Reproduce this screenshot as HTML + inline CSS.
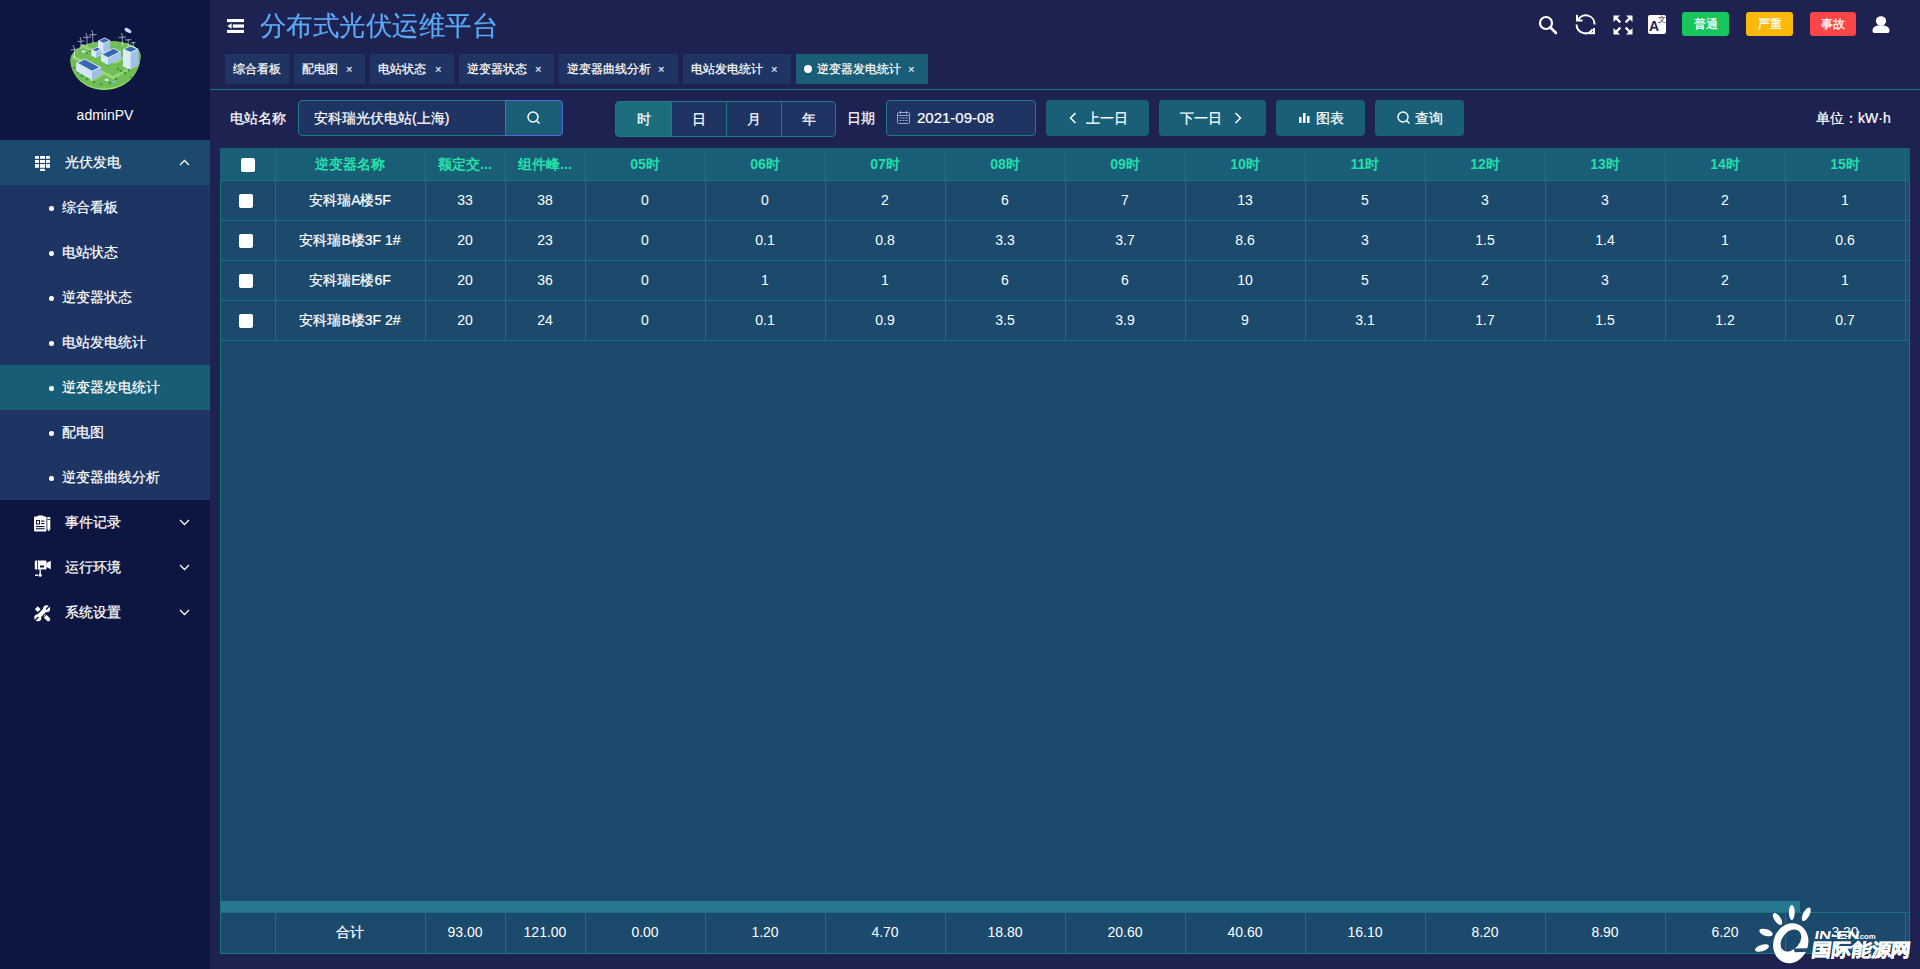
<!DOCTYPE html>
<html><head><meta charset="utf-8">
<style>
*{margin:0;padding:0;box-sizing:border-box}
html,body{width:1920px;height:969px;overflow:hidden;background:#1d2250;font-family:"Liberation Sans",sans-serif;color:#fff;font-size:14px}
.abs{position:absolute}
#side{position:absolute;left:0;top:0;width:210px;height:969px;background:#0d1541}
#logo{position:absolute;left:65px;top:20px;width:80px;height:75px}
#user{position:absolute;left:0;top:106px;width:210px;text-align:center;font-size:14px;line-height:18px}
.mi{position:absolute;left:0;width:210px;height:45px;font-size:14px;line-height:45px}
.mi .ic{position:absolute;left:34px;top:15px;width:16px;height:16px}
.mi .tx{position:absolute;left:65px;top:0}
.mi .ch{position:absolute;left:179px;top:19px;width:11px;height:7px}
.sub{position:absolute;left:0;width:210px;height:45px;line-height:45px;font-size:14px}
.sub .dot{position:absolute;left:49px;top:21px;width:4.5px;height:4.5px;border-radius:50%;background:#fff}
.sub .tx{position:absolute;left:62px;top:0}
#hdr-title{position:absolute;left:260px;top:7px;font-size:26.2px;letter-spacing:0.45px;line-height:36px;color:#5aaaf6;transform:scaleY(1.025);transform-origin:0 0;-webkit-text-stroke:0.2px #5aaaf6}
.tab{position:absolute;top:54px;height:30px;background:#1f3463;font-size:12px;line-height:30px;color:#fff;padding-left:8px}
.tab .x{position:absolute;font-size:11px;top:0;color:#dfe3ee}
#tabline{position:absolute;left:210px;top:89px;width:1710px;height:1px;background:#1a7d86}
.lbl{position:absolute;font-size:14px;line-height:18px}
.btn{position:absolute;top:100px;height:36px;background:#1a5f78;border-radius:4px;font-size:14px;line-height:36px;text-align:center}
#tbl{position:absolute;left:220px;top:148px;width:1690px;height:806px;background:#1b4a6d;border:1px solid #18777f}
.th{position:absolute;top:0;height:33px;background:#195d76}
.cell{position:absolute;text-align:center;font-size:13px}
.vl{position:absolute;width:1px;background:#18737d}
.hl{position:absolute;height:1px;background:#18737d}
.chk{position:absolute;width:14px;height:14px;background:#fff;border-radius:2px}
.th-t{position:absolute;top:148px;height:33px;line-height:33px;text-align:center;font-size:14px;font-weight:bold;color:#25dfa9}
.td{position:absolute;height:40px;line-height:40px;text-align:center;font-size:14px;color:#fff}
.cj{-webkit-text-stroke:0.22px #fff}
.tab,.sub .tx,.mi .tx,.lbl,.btn span{-webkit-text-stroke:0.22px #fff}
</style></head><body>
<div id="side">
  <div id="logo">
    <svg width="80" height="75" viewBox="0 0 80 75">
      <path d="M5.5 41 C5 30 22 21 42 21 C60 21 76 26 75.5 36 C75 55 60 70 39 70 C20 70 6 56 5.5 41Z" fill="#95e46a"/>
      <path d="M5.5 40 C5 30 22 21 42 21 C60 21 76 26 75.5 36 C75 54 60 68.5 39 68.5 C20 68.5 6 55 5.5 40Z" fill="#72bd55"/>
      <path d="M8 35 L48 56 L73 42 L74 45 L48 59.5 L7 38Z" fill="#98d57a"/>
      <path d="M18 24 L50 41 L70 30 L72 32 L50 44 L15 26Z" fill="#98d57a"/>
      <path d="M37 52 L24 60 L27 62 L40 54Z" fill="#98d57a"/>
      <g fill="#3e9a3c"><circle cx="9" cy="48" r="1.2"/><circle cx="13" cy="52" r="1.3"/><circle cx="17" cy="56" r="1.3"/><circle cx="22" cy="59" r="1.3"/><circle cx="29" cy="62" r="1.3"/><circle cx="36" cy="64.5" r="1.3"/><circle cx="45" cy="63" r="1.3"/><circle cx="51" cy="59" r="1.3"/><circle cx="53" cy="49" r="1.3"/><circle cx="56" cy="51" r="1.3"/><circle cx="60" cy="53" r="1.3"/><circle cx="64" cy="50" r="1.3"/><circle cx="68" cy="47" r="1.2"/><circle cx="43" cy="45" r="1.2"/><circle cx="46" cy="43" r="1.2"/><circle cx="22" cy="33" r="1.1"/><circle cx="25" cy="31" r="1.1"/><circle cx="41" cy="61" r="1.2"/><circle cx="66" cy="57" r="1.1"/></g>
      <g stroke="#eef3fa" stroke-width="0.6" fill="none">
        <path d="M9.5 38 V29 M5.5 30 L13.5 29 M9.5 29 L8 25"/>
        <path d="M16 29 V20.5 M12.5 21.5 L19.5 21 M16 20.5 L15 17"/>
        <path d="M22 26 V16.5 M18 17.5 L26 17 M22 16.5 L21 13"/>
        <path d="M27.8 23 V14 M24 15 L31.5 14.5 M27.8 14 L27 10"/>
        <path d="M57.3 25.5 V16.5 M53.5 17.5 L61 17 M57.3 16.5 L56.5 13"/>
        <path d="M63.2 25.5 V19.2 M60 20 L66.5 19.7"/>
        <path d="M68.3 26 V22 M66 22.8 L70.5 22.5"/>
      </g>
      <!-- tall right building -->
      <path d="M58 29.4 L58 46.4 L65.8 49.5 L65.8 32.9Z" fill="#dcebfb"/>
      <path d="M65.8 32.9 L65.8 49.5 L73.5 45 L73.5 29Z" fill="#9fc0ea"/>
      <path d="M58 29.4 L65.4 25.5 L73.5 29 L65.8 32.9Z" fill="#f2f7fd"/>
      <path d="M59.5 29.3 L65.4 26.5 L71.8 29.1 L65.8 31.9Z" fill="#3a66b6"/>
      <!-- tall mid building -->
      <path d="M33 20.5 L33 31 L38.7 34 L38.7 24Z" fill="#d8e9fb"/>
      <path d="M38.7 24 L38.7 34 L45.3 30.5 L45.3 20.5Z" fill="#a3c3eb"/>
      <path d="M33 20.5 L40 17.4 L45.3 20.5 L38.7 24Z" fill="#f2f7fd"/>
      <path d="M34.3 20.6 L40 18.2 L44 20.5 L38.7 23Z" fill="#3a66b6"/>
      <!-- small mid-left building -->
      <path d="M26.3 29.8 L26.3 35.5 L31 38 L31 32Z" fill="#dcebfb"/>
      <path d="M31 32 L31 38 L36.4 35 L36.4 29Z" fill="#a3c3eb"/>
      <path d="M26.3 29.8 L32.5 26.7 L36.4 29 L31 32Z" fill="#f2f7fd"/>
      <path d="M27.6 29.8 L32.5 27.4 L35.2 29 L31 31.2Z" fill="#3a66b6"/>
      <!-- long building -->
      <path d="M36 34.4 L36 41 L43.3 45.3 L43.3 38Z" fill="#d8e9fb"/>
      <path d="M43.3 38 L43.3 45.3 L56 38.7 L56 31.7Z" fill="#a6c5ec"/>
      <path d="M36 34.4 L48.4 27.9 L56 31.7 L43.3 38Z" fill="#f2f7fd"/>
      <path d="M37.6 34.4 L48.4 28.8 L54.4 31.8 L43.3 37.2Z" fill="#3a66b6"/>
      <!-- bottom-left building -->
      <path d="M11.2 43 L11.2 51 L27 60 L27 51.8Z" fill="#d3e5f9"/>
      <path d="M27 51.8 L27 60 L36 55 L36 47.2Z" fill="#9fbfe9"/>
      <path d="M11.2 43 L19.7 38.7 L36 47.2 L27 51.8Z" fill="#f2f7fd"/>
      <path d="M13 43 L19.7 39.6 L34.2 47.2 L27 50.8Z" fill="#3a66b6"/>
      <ellipse cx="63" cy="10.5" rx="3.8" ry="1.9" transform="rotate(32 63 10.5)" fill="#c9def5"/>
      <ellipse cx="18.5" cy="31.5" rx="2" ry="1.2" fill="#c9def5"/>
      <ellipse cx="41.5" cy="60" rx="2" ry="1.2" fill="#d8e6f6"/>
      <ellipse cx="49" cy="62" rx="2" ry="1.3" fill="#7fb6e0"/>
    </svg>
  </div>
  <div id="user">adminPV</div>

  <div class="mi" style="top:140px;background:#1b4a6e">
    <svg class="ic" viewBox="0 0 17 17" style="left:34px;top:15px;width:17px;height:17px"><g fill="#fff"><rect x="1" y="1" width="4" height="2.8"/><rect x="6" y="1" width="5" height="2.8"/><rect x="12" y="1" width="4" height="2.8"/><rect x="1" y="5" width="4" height="2.9"/><rect x="6" y="5" width="5" height="2.9"/><rect x="12" y="5" width="4" height="2.9"/><rect x="1" y="9.1" width="4" height="3.7"/><rect x="6" y="9.1" width="5" height="3.7"/><rect x="12" y="9.1" width="4" height="3.7"/><path d="M6.6 13.8 H10.4 L11.3 16 H5.7Z"/></g></svg>
    <span class="tx">光伏发电</span>
    <svg class="ch" viewBox="0 0 11 7"><path d="M1 6 L5.5 1.5 L10 6" stroke="#fff" stroke-width="1.3" fill="none"/></svg>
  </div>
  <div class="abs" style="left:0;top:185px;width:210px;height:315px;background:#1e3463"></div>
  <div class="sub" style="top:185px"><span class="dot"></span><span class="tx">综合看板</span></div>
  <div class="sub" style="top:230px"><span class="dot"></span><span class="tx">电站状态</span></div>
  <div class="sub" style="top:275px"><span class="dot"></span><span class="tx">逆变器状态</span></div>
  <div class="sub" style="top:320px"><span class="dot"></span><span class="tx">电站发电统计</span></div>
  <div class="sub" style="top:365px;background:#185d76"><span class="dot"></span><span class="tx">逆变器发电统计</span></div>
  <div class="sub" style="top:410px"><span class="dot"></span><span class="tx">配电图</span></div>
  <div class="sub" style="top:455px"><span class="dot"></span><span class="tx">逆变器曲线分析</span></div>

  <div class="mi" style="top:500px">
    <svg class="ic" viewBox="0 0 17 17" style="left:34px;top:15px;width:17px;height:17px"><g fill="#fff"><rect x="0" y="1.5" width="12.5" height="15" rx="1"/><rect x="3.5" y="0.5" width="6" height="2.5" rx="0.8"/><path d="M13.3 2 H16.3 V14 L14.8 16.5 L13.3 14Z"/></g><g fill="#0e1540"><rect x="2" y="5" width="4" height="4.5"/><rect x="7" y="5.5" width="3.5" height="1.1"/><rect x="7" y="8" width="3.5" height="1.1"/><rect x="2" y="11" width="8.5" height="1.1"/><rect x="2" y="13.2" width="8.5" height="1.1"/><rect x="13.3" y="4" width="3" height="0.8"/></g><rect x="3" y="6" width="2" height="2.5" fill="#fff"/></svg>
    <span class="tx">事件记录</span>
    <svg class="ch" viewBox="0 0 11 7"><path d="M1 1 L5.5 5.5 L10 1" stroke="#fff" stroke-width="1.3" fill="none"/></svg>
  </div>
  <div class="mi" style="top:545px">
    <svg class="ic" viewBox="0 0 17 17" style="left:34px;top:15px;width:17px;height:17px"><g fill="#fff"><rect x="0.8" y="0.5" width="11.8" height="9" rx="1.2"/><path d="M12.6 3 L16.8 0.8 V9.2 L12.6 7Z"/><rect x="5.5" y="9.5" width="1.3" height="4.5"/><circle cx="6.2" cy="15.2" r="1.6"/><rect x="1" y="14.5" width="3" height="1.4"/></g><g fill="#0e1540"><rect x="3" y="0.5" width="0.8" height="9"/><rect x="6" y="5.5" width="4" height="2"/></g></svg>
    <span class="tx">运行环境</span>
    <svg class="ch" viewBox="0 0 11 7"><path d="M1 1 L5.5 5.5 L10 1" stroke="#fff" stroke-width="1.3" fill="none"/></svg>
  </div>
  <div class="mi" style="top:590px">
    <svg class="ic" viewBox="0 0 17 17" style="left:34px;top:15px;width:17px;height:17px"><g stroke="#fff" stroke-linecap="round" fill="none"><path d="M3 13 L12.5 3.5" stroke-width="4.2"/><path d="M11.6 11.6 L14.3 14.3" stroke-width="3.8"/></g><circle cx="12.6" cy="3.8" r="3.5" fill="#fff"/><circle cx="3.8" cy="12.7" r="3.5" fill="#fff"/><path d="M12 4.4 L16 0.4" stroke="#0e1540" stroke-width="1.4"/><path d="M4.4 12.1 L0.6 15.9" stroke="#0e1540" stroke-width="1.4"/><path d="M9.9 12.3 L12.3 9.9" stroke="#0e1540" stroke-width="0.9"/><path d="M0.9 4.2 L3.8 1.3 L6.6 4.2 L3.8 7.1Z" fill="#fff"/></svg>
    <span class="tx">系统设置</span>
    <svg class="ch" viewBox="0 0 11 7"><path d="M1 1 L5.5 5.5 L10 1" stroke="#fff" stroke-width="1.3" fill="none"/></svg>
  </div>
</div>

<!-- header -->
<svg class="abs" style="left:227px;top:19px" width="17" height="14" viewBox="0 0 17 14"><g fill="#fff"><rect x="0" y="0" width="17" height="3.1"/><rect x="5.8" y="5.4" width="11.2" height="3.3"/><rect x="0" y="10.9" width="17" height="3.1"/><path d="M0.3 7 L4.6 4.3 L4.6 9.8Z"/></g></svg>
<div id="hdr-title">分布式光伏运维平台</div>

<!-- right icons -->
<svg class="abs" style="left:1538px;top:15px" width="20" height="20" viewBox="0 0 20 20"><circle cx="8" cy="8" r="6" stroke="#fff" stroke-width="2.2" fill="none"/><path d="M12.5 12.5 L18 18" stroke="#fff" stroke-width="2.6" stroke-linecap="round"/></svg>
<svg class="abs" style="left:1575px;top:14px" width="21" height="21" viewBox="0 0 21 21"><g stroke="#fff" stroke-width="2" fill="none"><path d="M3.2 5.8 A8.7 8.7 0 0 1 19.5 10.5"/><path d="M2 6.5 V1.8 M2 6.5 H6.5" stroke-linecap="square"/><path d="M1.6 10.5 A8.7 8.7 0 0 0 17.6 15.3"/><path d="M19 15 V19.3 M19 19.3 H14.5" stroke-linecap="square"/></g></svg>
<svg class="abs" style="left:1613px;top:15px" width="20" height="20" viewBox="0 0 20 20"><g fill="#fff"><path d="M0.5 0.5 H7 L0.5 7Z"/><path d="M19.5 0.5 H13 L19.5 7Z"/><path d="M0.5 19.5 H7 L0.5 13Z"/><path d="M19.5 19.5 H13 L19.5 13Z"/></g><g stroke="#fff" stroke-width="2.4"><path d="M3 3 L7.3 7.3 M17 3 L12.7 7.3 M3 17 L7.3 12.7 M17 17 L12.7 12.7"/></g></svg>
<div class="abs" style="left:1648px;top:15px;width:18px;height:19px;background:#fff;border-radius:2px"></div>
<div class="abs" style="left:1649px;top:17px;font-size:14px;font-weight:bold;color:#1e2350;line-height:18px">A</div>
<div class="abs" style="left:1658px;top:15px;font-size:8px;color:#1e2350;line-height:10px">文</div>
<div class="abs" style="left:1682px;top:12px;width:47px;height:24px;background:#18c45c;border-radius:3px;font-size:12px;line-height:24px;text-align:center;-webkit-text-stroke:0.25px #fff">普通</div>
<div class="abs" style="left:1746px;top:12px;width:47px;height:24px;background:#fdb90b;border-radius:3px;font-size:12px;line-height:24px;text-align:center;-webkit-text-stroke:0.25px #fff">严重</div>
<div class="abs" style="left:1810px;top:12px;width:46px;height:24px;background:#fa4646;border-radius:3px;font-size:12px;line-height:24px;text-align:center;-webkit-text-stroke:0.25px #fff">事故</div>
<svg class="abs" style="left:1871px;top:15px" width="20" height="20" viewBox="0 0 20 20"><ellipse cx="10" cy="5.9" rx="5.1" ry="4.7" fill="#fff"/><path d="M1.5 15.5 C1.5 12 5 10.3 10 10.3 C15 10.3 18.5 12 18.5 15.5 C18.5 17.5 17.5 18 16 18 H4 C2.5 18 1.5 17.5 1.5 15.5Z" fill="#fff"/></svg>

<!-- tabs -->
<div class="tab" style="left:225px;width:64px">综合看板</div>
<div class="tab" style="left:294px;width:71px">配电图<span class="x" style="left:52px">×</span></div>
<div class="tab" style="left:370px;width:84px">电站状态<span class="x" style="left:65px">×</span></div>
<div class="tab" style="left:459px;width:95px">逆变器状态<span class="x" style="left:76px">×</span></div>
<div class="tab" style="left:559px;width:119px">逆变器曲线分析<span class="x" style="left:99px">×</span></div>
<div class="tab" style="left:683px;width:108px">电站发电统计<span class="x" style="left:88px">×</span></div>
<div class="tab" style="left:796px;width:132px;background:#195d76;padding-left:21px"><span class="abs" style="left:8px;top:11px;width:8px;height:8px;border-radius:50%;background:#fff"></span>逆变器发电统计<span class="x" style="left:112px">×</span></div>
<div id="tabline"></div>

<!-- toolbar -->
<div class="lbl" style="left:230px;top:109px">电站名称</div>
<div class="abs" style="left:298px;top:100px;width:265px;height:36px;background:#1f3463;border:1px solid #1f7a84;border-radius:4px"></div>
<div class="abs" style="left:505px;top:100px;width:58px;height:36px;background:#195d76;border:1px solid #4c6bd8;border-radius:0 4px 4px 0"></div>
<svg class="abs" style="left:527px;top:111px" width="14" height="14" viewBox="0 0 14 14"><circle cx="6" cy="6" r="5" stroke="#fff" stroke-width="1.5" fill="none"/><path d="M9.5 9.5 L12.5 12.5" stroke="#fff" stroke-width="1.5"/></svg>
<div class="lbl" style="left:314px;top:109px">安科瑞光伏电站(上海)</div>

<div class="abs" style="left:615px;top:101px;width:221px;height:36px;background:#1f3463;border:1px solid #1f7a84;border-radius:4px;overflow:hidden">
  <div class="abs" style="left:0;top:0;width:55px;height:34px;background:#1a6e7e"></div>
  <div class="abs" style="left:55px;top:0;width:1px;height:34px;background:#1f7a84"></div>
  <div class="abs" style="left:110px;top:0;width:1px;height:34px;background:#1f7a84"></div>
  <div class="abs" style="left:165px;top:0;width:1px;height:34px;background:#1f7a84"></div>
  <div class="abs" style="left:0;top:0;width:55px;line-height:34px;text-align:center;-webkit-text-stroke:0.22px #fff">时</div>
  <div class="abs" style="left:55px;top:0;width:55px;line-height:34px;text-align:center;-webkit-text-stroke:0.22px #fff">日</div>
  <div class="abs" style="left:110px;top:0;width:55px;line-height:34px;text-align:center;-webkit-text-stroke:0.22px #fff">月</div>
  <div class="abs" style="left:165px;top:0;width:55px;line-height:34px;text-align:center;-webkit-text-stroke:0.22px #fff">年</div>
</div>
<div class="lbl" style="left:847px;top:109px">日期</div>
<div class="abs" style="left:886px;top:100px;width:150px;height:36px;background:#1f3463;border:1px solid #1f7a84;border-radius:4px"></div>
<svg class="abs" style="left:897px;top:111px" width="13" height="13" viewBox="0 0 13 13"><g stroke="#9aa7c4" fill="none" stroke-width="1"><rect x="0.5" y="1.5" width="12" height="11" rx="1"/><path d="M0.5 4.5 H12.5 M3.5 0 V3 M9.5 0 V3"/></g><g fill="#9aa7c4"><rect x="2.5" y="6.5" width="2" height="1"/><rect x="5.5" y="6.5" width="2" height="1"/><rect x="8.5" y="6.5" width="2" height="1"/><rect x="2.5" y="9" width="2" height="1"/><rect x="5.5" y="9" width="2" height="1"/><rect x="8.5" y="9" width="2" height="1"/></g></svg>
<div class="lbl" style="left:917px;top:109px;font-size:15px">2021-09-08</div>

<div class="btn" style="left:1046px;width:103px"><span style="padding-left:18px">上一日</span></div>
<svg class="abs" style="left:1069px;top:112px" width="8" height="12" viewBox="0 0 8 12"><path d="M6.5 1 L1.5 6 L6.5 11" stroke="#fff" stroke-width="1.5" fill="none"/></svg>
<div class="btn" style="left:1159px;width:107px"><span style="padding-right:24px">下一日</span></div>
<svg class="abs" style="left:1234px;top:112px" width="8" height="12" viewBox="0 0 8 12"><path d="M1.5 1 L6.5 6 L1.5 11" stroke="#fff" stroke-width="1.5" fill="none"/></svg>
<div class="btn" style="left:1276px;width:89px"><span style="padding-left:18px">图表</span></div>
<svg class="abs" style="left:1299px;top:112px" width="12" height="12" viewBox="0 0 12 12"><g fill="#fff"><rect x="0" y="5" width="2.5" height="6"/><rect x="4" y="1" width="2.5" height="10"/><rect x="8" y="4" width="2.5" height="7"/></g></svg>
<div class="btn" style="left:1375px;width:89px"><span style="padding-left:18px">查询</span></div>
<svg class="abs" style="left:1397px;top:111px" width="14" height="14" viewBox="0 0 14 14"><circle cx="6" cy="6" r="5" stroke="#fff" stroke-width="1.4" fill="none"/><path d="M9.5 9.5 L12.5 12.5" stroke="#fff" stroke-width="1.4"/></svg>
<div class="lbl" style="left:1816px;top:109px">单位：kW·h</div>

<!-- table -->
<div id="tbl"></div>
<div class="abs" style="left:220px;top:148px;width:1690px;height:33px;background:#195d76"></div>
<div class="hl" style="left:221px;top:180px;width:1688px"></div>
<div class="hl" style="left:221px;top:220px;width:1688px"></div>
<div class="hl" style="left:221px;top:260px;width:1688px"></div>
<div class="hl" style="left:221px;top:300px;width:1688px"></div>
<div class="hl" style="left:221px;top:340px;width:1688px"></div>
<div class="vl" style="left:275px;top:149px;height:192px"></div>
<div class="vl" style="left:425px;top:149px;height:192px"></div>
<div class="vl" style="left:505px;top:149px;height:192px"></div>
<div class="vl" style="left:585px;top:149px;height:192px"></div>
<div class="vl" style="left:705px;top:149px;height:192px"></div>
<div class="vl" style="left:825px;top:149px;height:192px"></div>
<div class="vl" style="left:945px;top:149px;height:192px"></div>
<div class="vl" style="left:1065px;top:149px;height:192px"></div>
<div class="vl" style="left:1185px;top:149px;height:192px"></div>
<div class="vl" style="left:1305px;top:149px;height:192px"></div>
<div class="vl" style="left:1425px;top:149px;height:192px"></div>
<div class="vl" style="left:1545px;top:149px;height:192px"></div>
<div class="vl" style="left:1665px;top:149px;height:192px"></div>
<div class="vl" style="left:1785px;top:149px;height:192px"></div>
<div class="vl" style="left:1905px;top:149px;height:192px"></div>
<div class="th-t" style="left:275px;width:150px">逆变器名称</div>
<div class="th-t" style="left:425px;width:80px">额定交...</div>
<div class="th-t" style="left:505px;width:80px">组件峰...</div>
<div class="th-t" style="left:585px;width:120px">05时</div>
<div class="th-t" style="left:705px;width:120px">06时</div>
<div class="th-t" style="left:825px;width:120px">07时</div>
<div class="th-t" style="left:945px;width:120px">08时</div>
<div class="th-t" style="left:1065px;width:120px">09时</div>
<div class="th-t" style="left:1185px;width:120px">10时</div>
<div class="th-t" style="left:1305px;width:120px">11时</div>
<div class="th-t" style="left:1425px;width:120px">12时</div>
<div class="th-t" style="left:1545px;width:120px">13时</div>
<div class="th-t" style="left:1665px;width:120px">14时</div>
<div class="th-t" style="left:1785px;width:120px">15时</div>
<div class="chk" style="left:241px;top:158px"></div>
<div class="chk" style="left:239px;top:194px"></div>
<div class="td" style="left:275px;top:180px;width:150px"><span class="cj">安科瑞A楼5F</span></div>
<div class="td" style="left:425px;top:180px;width:80px">33</div>
<div class="td" style="left:505px;top:180px;width:80px">38</div>
<div class="td" style="left:585px;top:180px;width:120px">0</div>
<div class="td" style="left:705px;top:180px;width:120px">0</div>
<div class="td" style="left:825px;top:180px;width:120px">2</div>
<div class="td" style="left:945px;top:180px;width:120px">6</div>
<div class="td" style="left:1065px;top:180px;width:120px">7</div>
<div class="td" style="left:1185px;top:180px;width:120px">13</div>
<div class="td" style="left:1305px;top:180px;width:120px">5</div>
<div class="td" style="left:1425px;top:180px;width:120px">3</div>
<div class="td" style="left:1545px;top:180px;width:120px">3</div>
<div class="td" style="left:1665px;top:180px;width:120px">2</div>
<div class="td" style="left:1785px;top:180px;width:120px">1</div>
<div class="chk" style="left:239px;top:234px"></div>
<div class="td" style="left:275px;top:220px;width:150px"><span class="cj">安科瑞B楼3F 1#</span></div>
<div class="td" style="left:425px;top:220px;width:80px">20</div>
<div class="td" style="left:505px;top:220px;width:80px">23</div>
<div class="td" style="left:585px;top:220px;width:120px">0</div>
<div class="td" style="left:705px;top:220px;width:120px">0.1</div>
<div class="td" style="left:825px;top:220px;width:120px">0.8</div>
<div class="td" style="left:945px;top:220px;width:120px">3.3</div>
<div class="td" style="left:1065px;top:220px;width:120px">3.7</div>
<div class="td" style="left:1185px;top:220px;width:120px">8.6</div>
<div class="td" style="left:1305px;top:220px;width:120px">3</div>
<div class="td" style="left:1425px;top:220px;width:120px">1.5</div>
<div class="td" style="left:1545px;top:220px;width:120px">1.4</div>
<div class="td" style="left:1665px;top:220px;width:120px">1</div>
<div class="td" style="left:1785px;top:220px;width:120px">0.6</div>
<div class="chk" style="left:239px;top:274px"></div>
<div class="td" style="left:275px;top:260px;width:150px"><span class="cj">安科瑞E楼6F</span></div>
<div class="td" style="left:425px;top:260px;width:80px">20</div>
<div class="td" style="left:505px;top:260px;width:80px">36</div>
<div class="td" style="left:585px;top:260px;width:120px">0</div>
<div class="td" style="left:705px;top:260px;width:120px">1</div>
<div class="td" style="left:825px;top:260px;width:120px">1</div>
<div class="td" style="left:945px;top:260px;width:120px">6</div>
<div class="td" style="left:1065px;top:260px;width:120px">6</div>
<div class="td" style="left:1185px;top:260px;width:120px">10</div>
<div class="td" style="left:1305px;top:260px;width:120px">5</div>
<div class="td" style="left:1425px;top:260px;width:120px">2</div>
<div class="td" style="left:1545px;top:260px;width:120px">3</div>
<div class="td" style="left:1665px;top:260px;width:120px">2</div>
<div class="td" style="left:1785px;top:260px;width:120px">1</div>
<div class="chk" style="left:239px;top:314px"></div>
<div class="td" style="left:275px;top:300px;width:150px"><span class="cj">安科瑞B楼3F 2#</span></div>
<div class="td" style="left:425px;top:300px;width:80px">20</div>
<div class="td" style="left:505px;top:300px;width:80px">24</div>
<div class="td" style="left:585px;top:300px;width:120px">0</div>
<div class="td" style="left:705px;top:300px;width:120px">0.1</div>
<div class="td" style="left:825px;top:300px;width:120px">0.9</div>
<div class="td" style="left:945px;top:300px;width:120px">3.5</div>
<div class="td" style="left:1065px;top:300px;width:120px">3.9</div>
<div class="td" style="left:1185px;top:300px;width:120px">9</div>
<div class="td" style="left:1305px;top:300px;width:120px">3.1</div>
<div class="td" style="left:1425px;top:300px;width:120px">1.7</div>
<div class="td" style="left:1545px;top:300px;width:120px">1.5</div>
<div class="td" style="left:1665px;top:300px;width:120px">1.2</div>
<div class="td" style="left:1785px;top:300px;width:120px">0.7</div>
<div class="abs" style="left:221px;top:901px;width:1579px;height:11px;background:#267891"></div>
<div class="hl" style="left:221px;top:912px;width:1688px"></div>
<div class="vl" style="left:275px;top:913px;height:40px"></div>
<div class="vl" style="left:425px;top:913px;height:40px"></div>
<div class="vl" style="left:505px;top:913px;height:40px"></div>
<div class="vl" style="left:585px;top:913px;height:40px"></div>
<div class="vl" style="left:705px;top:913px;height:40px"></div>
<div class="vl" style="left:825px;top:913px;height:40px"></div>
<div class="vl" style="left:945px;top:913px;height:40px"></div>
<div class="vl" style="left:1065px;top:913px;height:40px"></div>
<div class="vl" style="left:1185px;top:913px;height:40px"></div>
<div class="vl" style="left:1305px;top:913px;height:40px"></div>
<div class="vl" style="left:1425px;top:913px;height:40px"></div>
<div class="vl" style="left:1545px;top:913px;height:40px"></div>
<div class="vl" style="left:1665px;top:913px;height:40px"></div>
<div class="vl" style="left:1785px;top:913px;height:40px"></div>
<div class="vl" style="left:1905px;top:913px;height:40px"></div>
<div class="td" style="left:275px;top:912px;width:150px;height:41px;line-height:41px"><span class="cj">合计</span></div>
<div class="td" style="left:425px;top:912px;width:80px;height:41px;line-height:41px">93.00</div>
<div class="td" style="left:505px;top:912px;width:80px;height:41px;line-height:41px">121.00</div>
<div class="td" style="left:585px;top:912px;width:120px;height:41px;line-height:41px">0.00</div>
<div class="td" style="left:705px;top:912px;width:120px;height:41px;line-height:41px">1.20</div>
<div class="td" style="left:825px;top:912px;width:120px;height:41px;line-height:41px">4.70</div>
<div class="td" style="left:945px;top:912px;width:120px;height:41px;line-height:41px">18.80</div>
<div class="td" style="left:1065px;top:912px;width:120px;height:41px;line-height:41px">20.60</div>
<div class="td" style="left:1185px;top:912px;width:120px;height:41px;line-height:41px">40.60</div>
<div class="td" style="left:1305px;top:912px;width:120px;height:41px;line-height:41px">16.10</div>
<div class="td" style="left:1425px;top:912px;width:120px;height:41px;line-height:41px">8.20</div>
<div class="td" style="left:1545px;top:912px;width:120px;height:41px;line-height:41px">8.90</div>
<div class="td" style="left:1665px;top:912px;width:120px;height:41px;line-height:41px">6.20</div>
<div class="td" style="left:1785px;top:912px;width:120px;height:41px;line-height:41px">3.30</div>
<svg class="abs" style="left:1750px;top:895px" width="170" height="74" viewBox="0 0 170 74">
  <g fill="#fff">
    <ellipse cx="16" cy="37.5" rx="7" ry="3.3" transform="rotate(18 16 37.5)"/>
    <ellipse cx="12" cy="53" rx="7.3" ry="3.2" transform="rotate(-18 12 53)"/>
    <ellipse cx="27.5" cy="24" rx="3.2" ry="6.8" transform="rotate(-35 27.5 24)"/>
    <ellipse cx="41.8" cy="17.5" rx="2.9" ry="7.5"/>
    <ellipse cx="56.3" cy="19.3" rx="3.2" ry="7.5" transform="rotate(28 56.3 19.3)"/>
    <mask id="emask"><rect x="0" y="0" width="170" height="74" fill="#fff"/><ellipse cx="40" cy="45.6" rx="8.7" ry="12.4" transform="rotate(20 40 45.6)" fill="#000"/><path d="M45.5 52 L60 46.5 L60.5 50 L47.5 55.5Z" fill="#000"/></mask>
    <ellipse cx="40.75" cy="48.25" rx="17.3" ry="20.3" transform="rotate(20 40.75 48.25)" mask="url(#emask)"/>
  </g>
  <text x="64" y="44.3" font-family="Liberation Sans" font-weight="bold" font-size="11.5" fill="#fff" textLength="45" lengthAdjust="spacingAndGlyphs" transform="skewX(-10)" transform-origin="64 44">IN-EN</text>
  <text x="107.5" y="44.3" font-family="Liberation Sans" font-weight="bold" font-size="7.8" fill="#fff" textLength="18" lengthAdjust="spacingAndGlyphs">.com</text>
  <text x="61" y="61.5" font-family="Liberation Sans" font-weight="bold" font-size="18" fill="#fff" stroke="#fff" stroke-width="0.5" textLength="99" lengthAdjust="spacingAndGlyphs" transform="skewX(-8)" transform-origin="61 63">国际能源网</text>
</svg>
</body></html>
